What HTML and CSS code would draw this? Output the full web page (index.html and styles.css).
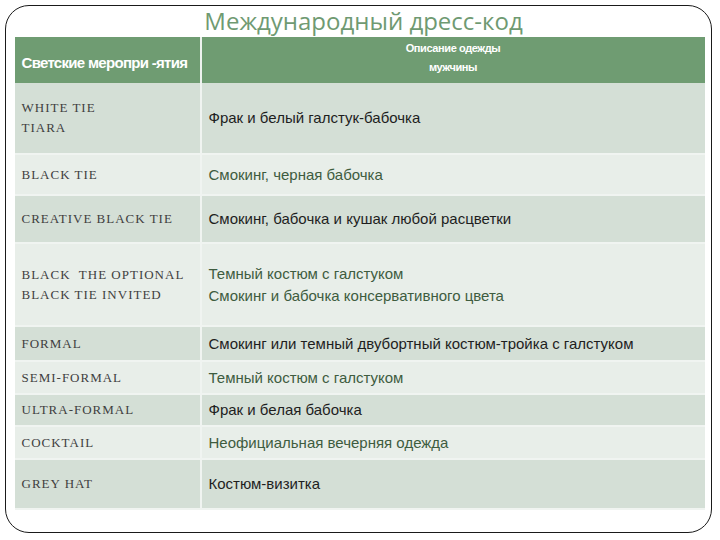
FILE: index.html
```html
<!DOCTYPE html>
<html lang="ru">
<head>
<meta charset="utf-8">
<title>Международный дресс-код</title>
<link rel="stylesheet" href="styles.css">
</head>
<body>
<div class="frame">
  <h1 class="title">Международный дресс-код</h1>
  <table class="dress">
    <colgroup><col class="c-left"><col class="c-right"></colgroup>
    <thead>
      <tr class="head">
        <th class="h-left">Светские меропри -ятия</th>
        <th class="h-right">Описание одежды<br>мужчины</th>
      </tr>
    </thead>
    <tbody>
      <tr class="dark r1"><td class="ev">WHITE TIE<br>TIARA</td><td class="ds">Фрак и белый галстук-бабочка</td></tr>
      <tr class="light r2"><td class="ev">BLACK TIE</td><td class="ds">Смокинг, черная бабочка</td></tr>
      <tr class="dark r3"><td class="ev">CREATIVE BLACK TIE</td><td class="ds">Смокинг, бабочка и кушак любой расцветки</td></tr>
      <tr class="light r4"><td class="ev">BLACK&nbsp; THE OPTIONAL<br>BLACK TIE INVITED</td><td class="ds two">Темный костюм с галстуком<br>Смокинг и бабочка консервативного цвета</td></tr>
      <tr class="dark r5"><td class="ev">FORMAL</td><td class="ds">Смокинг или темный двубортный костюм-тройка с галстуком</td></tr>
      <tr class="light r6"><td class="ev">SEMI-FORMAL</td><td class="ds">Темный костюм с галстуком</td></tr>
      <tr class="dark r7"><td class="ev">ULTRA-FORMAL</td><td class="ds">Фрак и белая бабочка</td></tr>
      <tr class="light r8"><td class="ev">COCKTAIL</td><td class="ds">Неофициальная вечерняя одежда</td></tr>
      <tr class="dark r9"><td class="ev">GREY HAT</td><td class="ds">Костюм-визитка</td></tr>
    </tbody>
  </table>
</div>
</body>
</html>
```
FILE: styles.css
```css
html, body {
  margin: 0;
  padding: 0;
  background: #ffffff;
}
.frame {
  box-sizing: border-box;
  margin: 5px 0 0 5px;
  width: 707px;
  height: 528px;
  border: 1.5px solid #1a1a1a;
  border-radius: 24px;
  padding: 0 0 0 8.5px;
}
.title {
  margin: 0;
  height: 31px;
  padding-left: 4px;
  text-align: center;
  width: 690px;
  font-family: "Open Sans", "Noto Sans", sans-serif;
  font-weight: 400;
  font-size: 24px;
  line-height: 30px;
  color: #6f9a72;
}
.dress {
  border-collapse: collapse;
  width: 690px;
  table-layout: fixed;
}
.c-left { width: 186px; }
.dress th, .dress td {
  padding: 0;
  vertical-align: middle;
}
.head {
  height: 46px;
  background: #6f9c72;
  color: #ffffff;
}
.h-left {
  text-align: left;
  padding-left: 7px !important;
  padding-top: 4px !important;
  font-family: "Liberation Sans", sans-serif;
  font-weight: 700;
  font-size: 15px;
  letter-spacing: -0.7px;
  border-right: 2px solid #eef2ef;
  white-space: nowrap;
}
.h-right {
  text-align: center;
  font-family: "Liberation Sans", sans-serif;
  font-weight: 700;
  font-size: 11px;
  letter-spacing: -0.4px;
  line-height: 19px;
  padding-bottom: 4px !important;
}
.dark { background: #d4dfd6; }
.light { background: #e8eee9; }
.dress tbody td {
  border-bottom: 2px solid #f0f4f1;
}
.ev {
  border-right: 2px solid #f0f4f1;
  padding-left: 7px !important;
  font-family: "Liberation Serif", serif;
  font-size: 13px;
  letter-spacing: 1px;
  line-height: 20px;
  color: #3f403f;
  white-space: nowrap;
}
.ds {
  padding-left: 7px !important;
  font-family: "Liberation Sans", sans-serif;
  font-size: 15px;
  line-height: 22px;
  color: #1e1e1e;
  white-space: nowrap;
}
.light .ds { color: #3e5c3f; }
.r1 { height: 71px; }
.r2 { height: 41px; }
.r3 { height: 48px; }
.r4 { height: 83px; }
.r5 { height: 35px; }
.r6 { height: 33px; }
.r7 { height: 32px; }
.r8 { height: 33px; }
.r9 { height: 50px; }
.r9 td { border-bottom: none; }
```
